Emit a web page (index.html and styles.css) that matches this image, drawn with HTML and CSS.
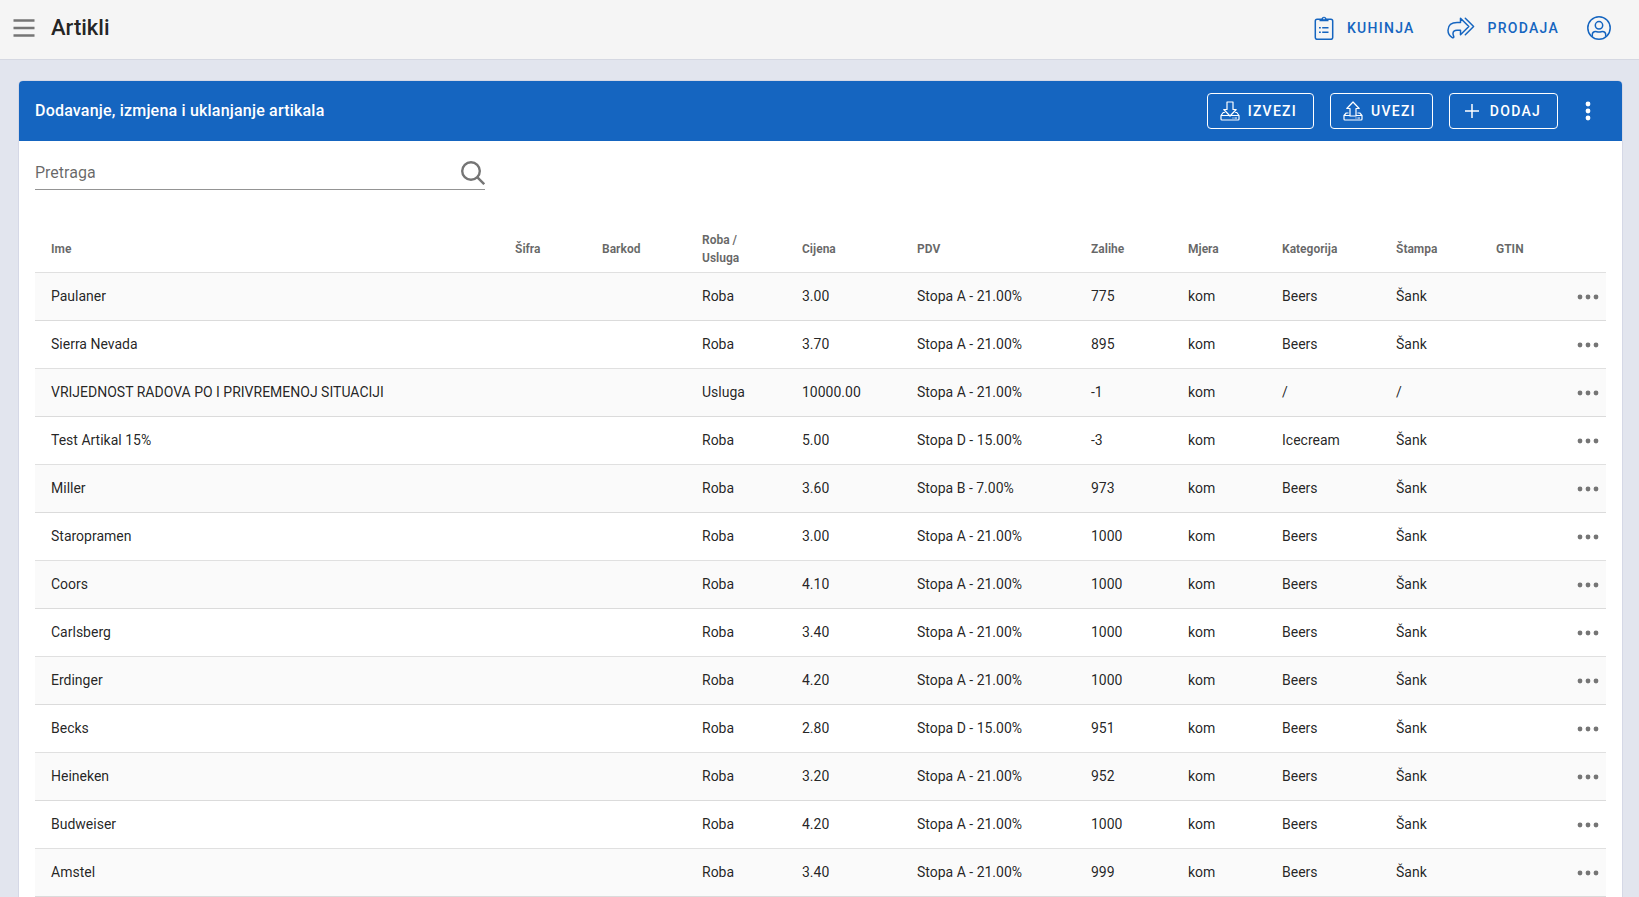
FILE: index.html
```html
<!DOCTYPE html>
<html lang="sr-Latn-ME">
  <head>
    <meta charset="UTF-8" />
    <meta name="viewport" content="width=device-width, initial-scale=1" />
    <title>Artikli</title>
    <link rel="stylesheet" href="styles.css">
  </head>
  <body>
    <svg class="sprite" aria-hidden="true">
      <symbol id="dots" viewBox="0 0 24 24">
        <circle cx="4" cy="12" r="2.4" />
        <circle cx="12" cy="12" r="2.4" />
        <circle cx="20" cy="12" r="2.4" />
      </symbol>
    </svg>

    <header class="app-bar">
      <button class="icon-btn menu-btn" aria-label="Meni">
        <svg width="22" height="22" viewBox="0 0 22 22" fill="none" stroke="currentColor" stroke-width="2.4">
          <path d="M0.5 3.5h21M0.5 11h21M0.5 18.5h21" />
        </svg>
      </button>
      <h1>Artikli</h1>
      <nav class="app-nav">
        <a href="#" class="nav-link">
          <svg width="20" height="24" viewBox="0 0 20 24" fill="none" stroke="currentColor" stroke-width="1.5">
            <rect x="1.3" y="3.3" width="17.4" height="20" rx="1.8" />
            <path d="M5.5 3.2h2c0-1.4 1-2.4 2.5-2.4s2.5 1 2.5 2.4h2v2.1h-9z" fill="currentColor" stroke="none" />
            <circle cx="10" cy="2.6" r="0.8" fill="#f5f5f5" stroke="none" />
            <path d="M5 11.7h1.8M8.200 11.7h6.3M5 16.3h1.8M8.200 16.3h6.3" />
          </svg>
          Kuhinja
        </a>
        <a href="#" class="nav-link">
          <svg width="28" height="22" viewBox="0 0 28 22" fill="none" stroke="currentColor" stroke-width="1.5" stroke-linejoin="round" stroke-linecap="round">
            <path d="M13.5 1.2l8.3 8.3-8.3 8.3v-4.6H10c-2.6 0-4 1.2-4 3.2 0 1.8.8 2.6.8 3.6 0 .9-1 .9-1.800.3C2.8 18.9 1 16.8 1 13.2 1 8.2 4.6 5.4 10 5.4h3.5z" />
            <path d="M18.3 1.2l8.3 8.3-8.3 8.3" />
          </svg>
          Prodaja
        </a>
        <button class="icon-btn user-btn" aria-label="Profil">
          <svg width="24" height="24" viewBox="0 0 24 24" fill="none" stroke="currentColor" stroke-width="1.5">
            <circle cx="12" cy="12" r="11.2" />
            <circle cx="12" cy="9.3" r="3.7" />
            <path d="M5.3 20.6v-1.8c0-2 1.4-3.3 3.4-3.3.9 0 1.5.6 3.3.6s2.4-.6 3.3-.6c2 0 3.4 1.3 3.4 3.3v1.8" />
          </svg>
        </button>
      </nav>
    </header>

    <main class="content">
      <section class="card">
        <div class="toolbar">
          <h2>Dodavanje, izmjena i uklanjanje artikala</h2>
          <button class="btn">
            <svg width="20" height="20" viewBox="0 0 20 20" fill="none" stroke="currentColor" stroke-width="1.2" stroke-linejoin="round">
              <path d="M7 1h6v7.5h3.2L10 15 3.8 8.5H7z" />
              <path d="M4.8 11.5H3.2L1 14.5v3.6c0 .5.4.9.9.9h16.2c.5 0 .9-.4.9-.9v-3.6l-2.2-3h-1.6M1 14.5h8.5M10.5 14.5H19M12.5 17h1M14.5 17h2.5" />
            </svg>
            Izvezi
          </button>
          <button class="btn">
            <svg width="20" height="20" viewBox="0 0 20 20" fill="none" stroke="currentColor" stroke-width="1.2" stroke-linejoin="round">
              <path d="M7 15h6V7.5h3.2L10 1 3.8 7.5H7z" />
              <path d="M5.5 12H3.2L1 14.5v3.6c0 .5.4.9.9.9h16.2c.5 0 .9-.4.9-.9v-3.6L16.8 12h-2.3M1 14.5h6M13 14.5h6M12.5 17h1M14.5 17h2.5" />
            </svg>
            Uvezi
          </button>
          <button class="btn">
            <svg width="20" height="20" viewBox="0 0 20 20" fill="none" stroke="currentColor" stroke-width="1.5">
              <path d="M10 3v14M3 10h14" />
            </svg>
            Dodaj
          </button>
          <button class="icon-btn more-btn" aria-label="Više">
            <svg width="20" height="20" viewBox="0 0 20 20" fill="currentColor">
              <circle cx="10" cy="3" r="2.4" />
              <circle cx="10" cy="10" r="2.4" />
              <circle cx="10" cy="17" r="2.4" />
            </svg>
          </button>
        </div>

        <div class="card-body">
          <div class="search">
            <input type="text" placeholder="Pretraga" aria-label="Pretraga" />
            <svg width="24" height="24" viewBox="0 0 24 24" fill="none" stroke="currentColor" stroke-width="2.4">
              <circle cx="10" cy="10" r="8.8" />
              <path d="M16.2 16.2l7 7" />
            </svg>
          </div>

          <table class="items">
            <colgroup>
              <col />
              <col class="col-code" />
              <col class="col-barcode" />
              <col class="col-type" />
              <col class="col-price" />
              <col class="col-vat" />
              <col class="col-stock" />
              <col class="col-unit" />
              <col class="col-category" />
              <col class="col-print" />
              <col class="col-gtin" />
              <col class="col-actions" />
            </colgroup>
            <thead>
              <tr>
                <th>Ime</th>
                <th>Šifra</th>
                <th>Barkod</th>
                <th>Roba / Usluga</th>
                <th>Cijena</th>
                <th>PDV</th>
                <th>Zalihe</th>
                <th>Mjera</th>
                <th>Kategorija</th>
                <th>Štampa</th>
                <th>GTIN</th>
                <th></th>
              </tr>
            </thead>
            <tbody>
              <tr>
                <td>Paulaner</td><td></td><td></td><td>Roba</td><td>3.00</td><td>Stopa A - 21.00%</td>
                <td>775</td><td>kom</td><td>Beers</td><td>Šank</td><td></td>
                <td><button class="icon-btn row-btn" aria-label="Opcije"><svg><use href="#dots" /></svg></button></td>
              </tr>
              <tr>
                <td>Sierra Nevada</td><td></td><td></td><td>Roba</td><td>3.70</td><td>Stopa A - 21.00%</td>
                <td>895</td><td>kom</td><td>Beers</td><td>Šank</td><td></td>
                <td><button class="icon-btn row-btn" aria-label="Opcije"><svg><use href="#dots" /></svg></button></td>
              </tr>
              <tr>
                <td>VRIJEDNOST RADOVA PO I PRIVREMENOJ SITUACIJI</td><td></td><td></td><td>Usluga</td><td>10000.00</td><td>Stopa A - 21.00%</td>
                <td>-1</td><td>kom</td><td>/</td><td>/</td><td></td>
                <td><button class="icon-btn row-btn" aria-label="Opcije"><svg><use href="#dots" /></svg></button></td>
              </tr>
              <tr>
                <td>Test Artikal 15%</td><td></td><td></td><td>Roba</td><td>5.00</td><td>Stopa D - 15.00%</td>
                <td>-3</td><td>kom</td><td>Icecream</td><td>Šank</td><td></td>
                <td><button class="icon-btn row-btn" aria-label="Opcije"><svg><use href="#dots" /></svg></button></td>
              </tr>
              <tr>
                <td>Miller</td><td></td><td></td><td>Roba</td><td>3.60</td><td>Stopa B - 7.00%</td>
                <td>973</td><td>kom</td><td>Beers</td><td>Šank</td><td></td>
                <td><button class="icon-btn row-btn" aria-label="Opcije"><svg><use href="#dots" /></svg></button></td>
              </tr>
              <tr>
                <td>Staropramen</td><td></td><td></td><td>Roba</td><td>3.00</td><td>Stopa A - 21.00%</td>
                <td>1000</td><td>kom</td><td>Beers</td><td>Šank</td><td></td>
                <td><button class="icon-btn row-btn" aria-label="Opcije"><svg><use href="#dots" /></svg></button></td>
              </tr>
              <tr>
                <td>Coors</td><td></td><td></td><td>Roba</td><td>4.10</td><td>Stopa A - 21.00%</td>
                <td>1000</td><td>kom</td><td>Beers</td><td>Šank</td><td></td>
                <td><button class="icon-btn row-btn" aria-label="Opcije"><svg><use href="#dots" /></svg></button></td>
              </tr>
              <tr>
                <td>Carlsberg</td><td></td><td></td><td>Roba</td><td>3.40</td><td>Stopa A - 21.00%</td>
                <td>1000</td><td>kom</td><td>Beers</td><td>Šank</td><td></td>
                <td><button class="icon-btn row-btn" aria-label="Opcije"><svg><use href="#dots" /></svg></button></td>
              </tr>
              <tr>
                <td>Erdinger</td><td></td><td></td><td>Roba</td><td>4.20</td><td>Stopa A - 21.00%</td>
                <td>1000</td><td>kom</td><td>Beers</td><td>Šank</td><td></td>
                <td><button class="icon-btn row-btn" aria-label="Opcije"><svg><use href="#dots" /></svg></button></td>
              </tr>
              <tr>
                <td>Becks</td><td></td><td></td><td>Roba</td><td>2.80</td><td>Stopa D - 15.00%</td>
                <td>951</td><td>kom</td><td>Beers</td><td>Šank</td><td></td>
                <td><button class="icon-btn row-btn" aria-label="Opcije"><svg><use href="#dots" /></svg></button></td>
              </tr>
              <tr>
                <td>Heineken</td><td></td><td></td><td>Roba</td><td>3.20</td><td>Stopa A - 21.00%</td>
                <td>952</td><td>kom</td><td>Beers</td><td>Šank</td><td></td>
                <td><button class="icon-btn row-btn" aria-label="Opcije"><svg><use href="#dots" /></svg></button></td>
              </tr>
              <tr>
                <td>Budweiser</td><td></td><td></td><td>Roba</td><td>4.20</td><td>Stopa A - 21.00%</td>
                <td>1000</td><td>kom</td><td>Beers</td><td>Šank</td><td></td>
                <td><button class="icon-btn row-btn" aria-label="Opcije"><svg><use href="#dots" /></svg></button></td>
              </tr>
              <tr>
                <td>Amstel</td><td></td><td></td><td>Roba</td><td>3.40</td><td>Stopa A - 21.00%</td>
                <td>999</td><td>kom</td><td>Beers</td><td>Šank</td><td></td>
                <td><button class="icon-btn row-btn" aria-label="Opcije"><svg><use href="#dots" /></svg></button></td>
              </tr>
            </tbody>
          </table>
        </div>
      </section>
    </main>
  </body>
</html>
```
FILE: styles.css
```css
* {
  box-sizing: border-box;
}
body {
  margin: 0;
  height: 100vh;
  display: flex;
  flex-direction: column;
  font-family: Roboto, sans-serif;
  font-size: 16px;
  line-height: 24px;
  color: rgba(0, 0, 0, 0.87);
  background: #e2e5ee;
}
h1,
h2 {
  margin: 0;
  font-weight: 500;
}
svg {
  display: block;
  flex: none;
}
button,
input {
  font: inherit;
  color: inherit;
}
.sprite {
  position: absolute;
  width: 0;
  height: 0;
}

/* top bar */
.app-bar {
  display: flex;
  align-items: center;
  flex: none;
  height: 60px;
  padding: 0 28px 4px 13px;
  background: #f5f5f5;
  border-bottom: 1px solid #d5d8e2;
}
.app-bar h1 {
  margin-left: 16px;
  font-size: 22px;
}
.app-nav {
  display: flex;
  align-items: center;
  gap: 32px;
  margin-left: auto;
  color: #1565c0;
}
.nav-link {
  display: flex;
  align-items: center;
  gap: 13px;
  color: inherit;
  font-size: 14px;
  font-weight: 500;
  letter-spacing: 0.09em;
  text-transform: uppercase;
  text-decoration: none;
}
.icon-btn {
  display: flex;
  align-items: center;
  justify-content: center;
  padding: 0;
  border: none;
  background: none;
  cursor: pointer;
}
.menu-btn {
  color: #757575;
}
.user-btn,
.more-btn {
  margin-left: -4px;
}

/* card */
.content {
  flex: 1;
  min-height: 0;
  padding: 20px 16px 0 18px;
  overflow-y: auto;
  scrollbar-width: none;
}
.card {
  background: #fff;
  border: 1px solid #d5d8e6;
  border-radius: 5px;
  overflow: hidden;
}
.toolbar {
  display: flex;
  align-items: center;
  gap: 16px;
  height: 60px;
  padding: 0 16px;
  background: #1565c0;
  color: #fff;
}
.toolbar h2 {
  flex: 1;
  font-size: 16px;
  letter-spacing: 0.0125em;
}
.btn {
  display: flex;
  align-items: center;
  gap: 8px;
  height: 36px;
  padding: 0 16px 0 12px;
  border: 1px solid #fff;
  border-radius: 4px;
  background: none;
  font-size: 14px;
  font-weight: 500;
  letter-spacing: 0.09em;
  text-transform: uppercase;
  cursor: pointer;
}
.more-btn {
  width: 36px;
  height: 36px;
}
.card-body {
  padding: 16px 16px 32px;
}
.search {
  display: flex;
  align-items: center;
  width: 450px;
  max-width: 100%;
  height: 33px;
  margin-bottom: 34px;
  border-bottom: 1px solid #949494;
  color: #757575;
}
.search input {
  flex: 1;
  min-width: 0;
  padding: 0;
  border: none;
  outline: none;
  background: none;
  color: rgba(0, 0, 0, 0.87);
}
.search input::placeholder {
  color: rgba(0, 0, 0, 0.6);
}

/* items table */
.items {
  width: 100%;
  table-layout: fixed;
  border-collapse: separate;
  border-spacing: 0;
  font-size: 14px;
}
.items th,
.items td {
  height: 48px;
  padding: 0 16px 2px;
  text-align: left;
  border-bottom: 1px solid rgba(0, 0, 0, 0.12);
}
.items th {
  height: 49px;
  padding: 2px 16px 0;
  font-size: 12px;
  line-height: 18px;
  font-weight: 700;
  color: rgba(0, 0, 0, 0.6);
}
.items tbody tr:nth-child(odd) {
  background: #fafafa;
}
.items th:last-child,
.items td:last-child {
  padding: 0;
}
.col-code {
  width: 87px;
}
.col-barcode,
.col-type {
  width: 100px;
}
.col-price {
  width: 115px;
}
.col-vat {
  width: 174px;
}
.col-stock {
  width: 97px;
}
.col-unit {
  width: 94px;
}
.col-category {
  width: 114px;
}
.col-print {
  width: 100px;
}
.col-gtin {
  width: 90px;
}
.col-actions {
  width: 36px;
}
.row-btn {
  width: 36px;
  height: 36px;
  color: #757575;
}
.row-btn svg {
  width: 24px;
  height: 24px;
  fill: currentColor;
}
```
